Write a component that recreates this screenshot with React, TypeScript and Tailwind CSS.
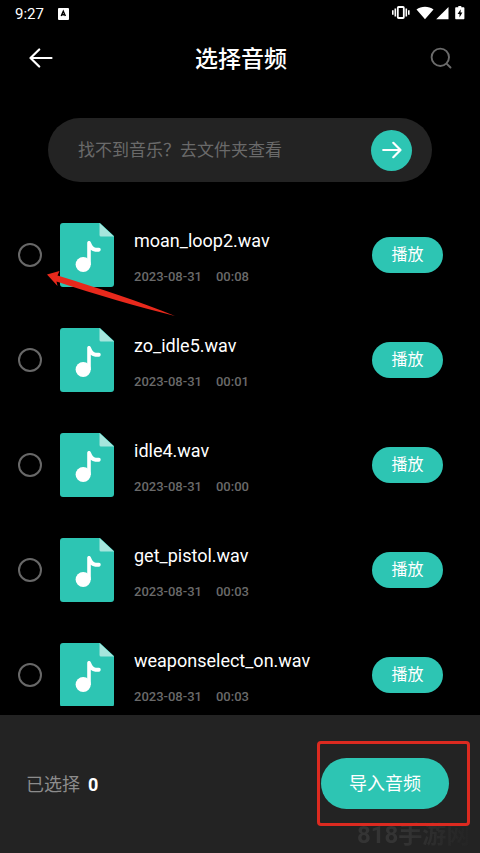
type Track = {
    name: string
    date: string
    length: string
}

const tracks: Track[] = [
    { name: 'moan_loop2.wav', date: '2023-08-31', length: '00:08' },
    { name: 'zo_idle5.wav', date: '2023-08-31', length: '00:01' },
    { name: 'idle4.wav', date: '2023-08-31', length: '00:00' },
    { name: 'get_pistol.wav', date: '2023-08-31', length: '00:03' },
    { name: 'weaponselect_on.wav', date: '2023-08-31', length: '00:03' },
]

function StatusBar() {
    return (
        <div className="flex h-7 shrink-0 items-center justify-between px-[15px] text-white">
            <div className="flex items-center gap-3.5">
                <span className="text-[15px] leading-7">9:27</span>
                <svg width="11" height="12" viewBox="0 0 11 12" aria-hidden="true">
                    <rect width="11" height="12" rx="1" fill="#fff" />
                    <path d="M3.2 8 5.3 3.2 7.400 8M4 6.700h2.600" fill="none" stroke="#000" strokeWidth="1.4" />
                </svg>
            </div>

            <svg className="-mt-1" width="74" height="16" viewBox="0 0 74 16" fill="#fff" aria-hidden="true">
                {/* Vibrate */}
                <rect x="6.8" y="3" width="6" height="11" rx="0.8" fill="none" stroke="#fff" strokeWidth="1.8" />
                <path d="M4.300 4.500v8M15.300 4.500v8M1.800 6.200v4.600M17.800 6.200v4.600" stroke="#fff" strokeWidth="1.6" />
                {/* Wifi */}
                <path d="M25.5 5.5c4.6-3.6 12.4-3.6 17 0L34 15.2z" />
                {/* Signal */}
                <path d="M57.5 3v12.3H45.2z" />
                {/* Battery */}
                <path d="M67.3 2h3v1.3h2.1c.6 0 1 .4 1 1v10c0 .6-.4 1-1 1h-7.2c-.6 0-1-.4-1-1v-10c0-.6.4-1 1-1h2.1z" />
                <path d="M69.8 5.2 66.6 10h1.9v3.6l2.9-5h-1.9z" fill="#000" />
            </svg>
        </div>
    )
}

function Header() {
    return (
        <header className="flex h-15 shrink-0 items-center justify-between pl-[27px] pr-[25px] text-white">
            <button type="button" aria-label="返回" className="flex size-7 items-center justify-center">
                <svg
                    width="24"
                    height="20"
                    viewBox="0 0 24 20"
                    fill="none"
                    stroke="#fff"
                    strokeWidth="2.2"
                    strokeLinecap="round"
                    strokeLinejoin="round"
                >
                    <path d="M22.5 10H1.5M10.2 1.5 1.5 10l8.7 8.5" />
                </svg>
            </button>

            <h1 className="pt-1 text-[23px] font-medium leading-8">选择音频</h1>

            <button type="button" aria-label="搜索" className="flex size-7 items-center justify-center">
                <svg
                    width="22"
                    height="22"
                    viewBox="0 0 22 22"
                    fill="none"
                    stroke="#6b6b6b"
                    strokeWidth="1.9"
                    strokeLinecap="round"
                >
                    <circle cx="10.3" cy="10.3" r="8.7" />
                    <path d="m16.8 16.8 3.7 3.7" />
                </svg>
            </button>
        </header>
    )
}

function FolderLink() {
    return (
        <a
            href="#folders"
            className="mx-12 mt-[30px] flex h-16 shrink-0 items-center justify-between rounded-full bg-[#232323] pl-[30px] pr-5"
        >
            <span className="text-[17px] leading-6 text-[#6a6a6a]">找不到音乐？去文件夹查看</span>
            <span className="flex size-[41px] items-center justify-center rounded-full bg-[#2dc5b3]">
                <svg
                    width="20"
                    height="18"
                    viewBox="0 0 20 18"
                    fill="none"
                    stroke="#fff"
                    strokeWidth="2.2"
                    strokeLinecap="round"
                    strokeLinejoin="round"
                    aria-hidden="true"
                >
                    <path d="M1.2 9h17.3M11.3 1.8 18.5 9l-7.2 7.2" />
                </svg>
            </span>
        </a>
    )
}

function AudioFileIcon() {
    return (
        <svg className="shrink-0" width="54" height="64" viewBox="0 0 54 64" aria-hidden="true">
            <path d="M3 0h37l14 13v48a3 3 0 0 1-3 3H3a3 3 0 0 1-3-3V3a3 3 0 0 1 3-3z" fill="#2dc5b3" />
            <path d="M39.5 0 54 13.5H41a1.5 1.5 0 0 1-1.5-1.5z" fill="#a5e6dd" />
            <circle cx="23.2" cy="41.500" r="7.600" fill="#fff" />
            <path
                d="M27.200 41V20c0-2.400 2.900-2.500 3.600-.8l1.300 2.700c1.200 2.300 3.400 3.200 6.700 2.900 2.500-.2 2.600 3.500.2 3.900-3.300.5-6-.2-8.200-2V42z"
                fill="#fff"
            />
        </svg>
    )
}

function TrackRow({ track }: { track: Track }) {
    return (
        <li className="flex h-16 shrink-0 items-center">
            <input
                type="checkbox"
                aria-label={track.name}
                className="size-6 shrink-0 appearance-none rounded-full border-2 border-[#686868] checked:border-[#2dc5b3] checked:bg-[#2dc5b3]"
            />
            <div className="ml-[18px]">
                <AudioFileIcon />
            </div>
            <div className="ml-5 flex min-w-0 flex-1 flex-col gap-4 pt-1">
                <span className="truncate text-lg leading-6 text-white">{track.name}</span>
                <span className="flex gap-3.5 text-[13px] font-medium leading-4 text-[#6a6a6a]">
                    <span>{track.date}</span>
                    <span>{track.length}</span>
                </span>
            </div>
            <button
                type="button"
                className="h-9 w-[71px] shrink-0 rounded-full bg-[#2dc5b3] text-base leading-6 text-white"
            >
                播放
            </button>
        </li>
    )
}

function ImportBar() {
    return (
        <footer className="flex shrink-0 items-center justify-between bg-[#232323] pb-11 pl-[26px] pr-[31px] pt-[43px]">
            <p className="flex items-center gap-2 pt-0.5 text-lg leading-6 text-[#8c8c8c]">
                已选择
                <span className="font-bold text-white">0</span>
            </p>

            <div className="relative">
                <button
                    type="button"
                    className="block h-[51px] w-32 rounded-full bg-[#2dc5b3] text-lg leading-6 text-white"
                >
                    导入音频
                </button>
                <span className="pointer-events-none absolute -bottom-10 left-9 whitespace-nowrap bg-linear-to-r from-[#343434] from-40% to-[#242424] bg-clip-text text-2xl font-bold leading-7 text-transparent">
                    818手游网
                </span>
                {/* Highlight frame */}
                <span className="pointer-events-none absolute -bottom-[17px] -left-1 -right-[21px] -top-[17px] rounded-sm border-[3px] border-[#dc2a20]" />
            </div>
        </footer>
    )
}

export default function App() {
    return (
        <div className="relative flex h-screen flex-col overflow-hidden bg-black font-[Roboto,'Noto_Sans_CJK_SC',sans-serif]">
            <StatusBar />
            <Header />
            <FolderLink />

            <main className="mb-[9px] mt-[41px] min-h-0 flex-1 overflow-hidden">
                <ul className="flex flex-col gap-[41px] pl-[18px] pr-[37px]">
                    {tracks.map((track) => (
                        <TrackRow key={track.name} track={track} />
                    ))}
                </ul>
            </main>

            <ImportBar />

            {/* Pointer to the first tick box */}
            <svg
                className="pointer-events-none absolute left-[47px] top-[271px]"
                width="130"
                height="48"
                viewBox="0 0 130 48"
                fill="#e8291c"
                aria-hidden="true"
            >
                <path d="M0 3.500 12.500 0 10.500 4.500C52 17.500 92 30 128 45 90 35.500 50 24 9.500 10.500L10.500 15z" />
            </svg>
        </div>
    )
}
